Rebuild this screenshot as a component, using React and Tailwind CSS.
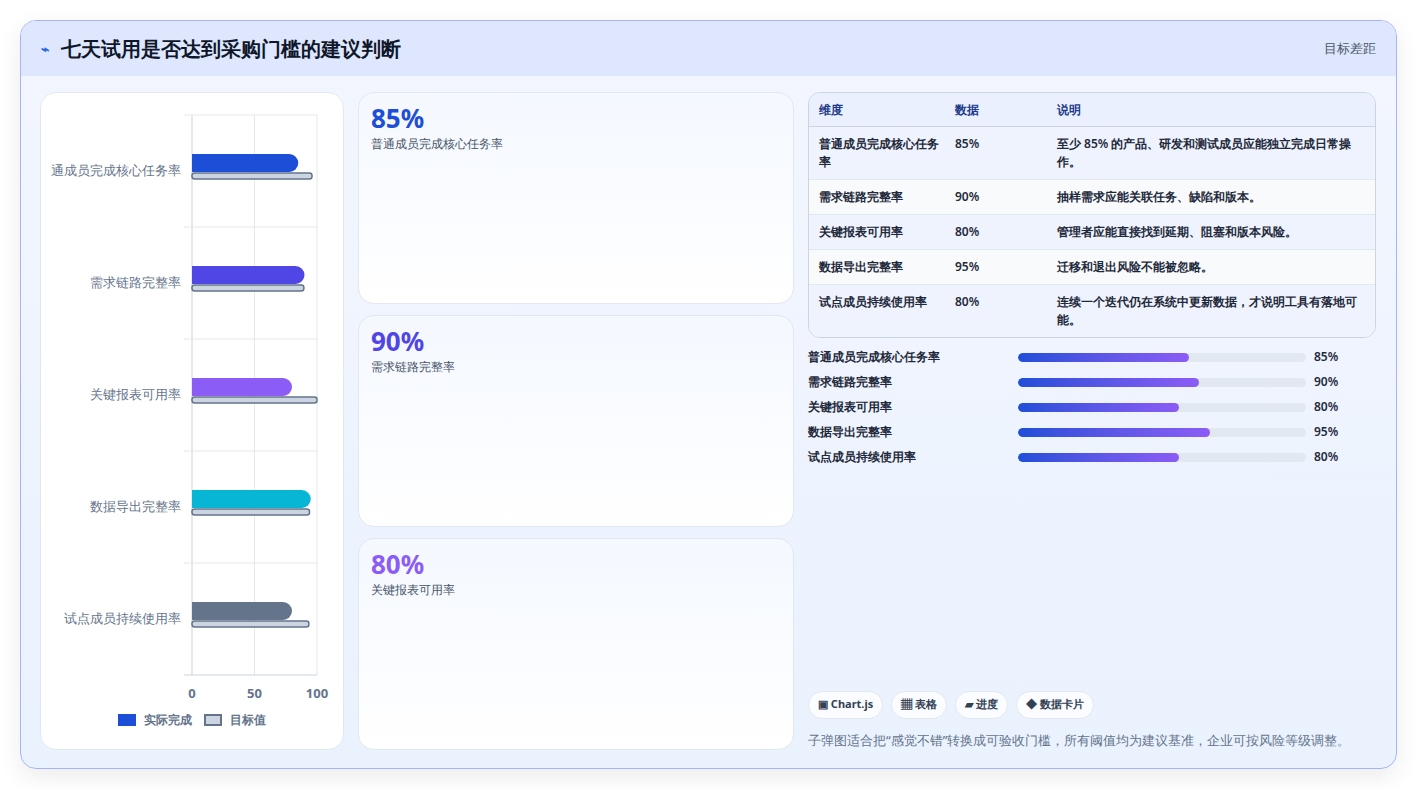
import React from "react";

const rows = [
  ["通成员完成核心任务率", 85, 96, "#1d4ed8"],
  ["需求链路完整率", 90, 89.5, "#4f46e5"],
  ["关键报表可用率", 80, 100, "#8b5cf6"],
  ["数据导出完整率", 95, 94, "#06b6d4"],
  ["试点成员持续使用率", 80, 93.5, "#64748b"],
];

function Chart() {
  const x0 = 151, w = 125, top = 22, band = 112;
  return (
    <svg width="303" height="620" className="block">
      {[0, 50, 100].map((v) => (
        <line key={v} x1={x0 + (v / 100) * w} x2={x0 + (v / 100) * w} y1={top} y2={top + band * 5} stroke={v === 0 ? "#cbd5e1" : "#e5e7eb"} />
      ))}
      {[0, 1, 2, 3, 4, 5].map((i) => (
        <line key={i} x1={x0 - 8} x2={x0 + w} y1={top + band * i} y2={top + band * i} stroke={i === 5 ? "#cbd5e1" : "#e5e7eb"} />
      ))}
      {rows.map(([l, a, t, c], i) => {
        const cy = top + band * i + 56;
        const aw = (a / 100) * w, tw = (t / 100) * w;
        return (
          <g key={i}>
            <text x={x0 - 11} y={cy + 4} textAnchor="end" fontSize="13" fill="#64748b">{l}</text>
            <path d={`M${x0} ${cy - 17} H${x0 + aw - 9} a9 9 0 0 1 9 9 v0 a9 9 0 0 1 -9 9 H${x0} Z`} fill={c} />
            <rect x={x0} y={cy + 2} width={tw} height={6} rx="2.5" fill="#cbd5e1" stroke="#64748b" strokeWidth="1.5" />
          </g>
        );
      })}
      {[0, 50, 100].map((v) => (
        <text key={v} x={x0 + (v / 100) * w} y={605} textAnchor="middle" fontSize="13" fontWeight="700" fill="#64748b">{v}</text>
      ))}
    </svg>
  );
}

const table = [
  ["普通成员完成核心任务率", "85%", "至少 85% 的产品、研发和测试成员应能独立完成日常操作。"],
  ["需求链路完整率", "90%", "抽样需求应能关联任务、缺陷和版本。"],
  ["关键报表可用率", "80%", "管理者应能直接找到延期、阻塞和版本风险。"],
  ["数据导出完整率", "95%", "迁移和退出风险不能被忽略。"],
  ["试点成员持续使用率", "80%", "连续一个迭代仍在系统中更新数据，才说明工具有落地可能。"],
];

const cards = [
  ["85%", "普通成员完成核心任务率", "text-[#1d4ed8]"],
  ["90%", "需求链路完整率", "text-[#4f46e5]"],
  ["80%", "关键报表可用率", "text-[#8b5cf6]"],
];

export default function App() {
  return (
    <div className="w-[1417px] h-[789px] bg-white p-5 font-['Liberation_Sans','Noto_Sans_CJK_SC',sans-serif]">
      <div className="h-[749px] rounded-2xl border border-[#a5b4fc] bg-gradient-to-b from-[#f3f6fe] to-[#eaf2fe] overflow-hidden shadow-[0_8px_24px_rgba(0,0,0,0.08)] flex flex-col">
        <div className="h-[55px] bg-[#dee7fd] flex items-center justify-between px-5 shrink-0">
          <div className="flex items-center gap-3">
            <span className="text-[#2563eb] text-[14px] font-bold">⌁</span>
            <span className="text-[20px] font-bold text-[#0f172a]">七天试用是否达到采购门槛的建议判断</span>
          </div>
          <span className="text-[13px] text-[#475569]">目标差距</span>
        </div>
        <div className="flex-1 flex gap-[14px] pl-[19px] pr-5 pt-[16px] pb-[18px]">
          <div className="w-[304px] bg-white rounded-2xl border border-[#e2e8f0] relative">
            <div className="absolute left-0 top-0"><Chart /></div>
            <div className="absolute left-0 right-0 bottom-[20px] flex justify-center items-center gap-2 text-[12px] font-bold text-[#64748b]">
              <span className="w-[18px] h-[12px] bg-[#1d4ed8]" />实际完成
              <span className="w-[18px] h-[12px] bg-[#cbd5e1] border-2 border-[#64748b] ml-1" />目标值
            </div>
          </div>
          <div className="w-[436px] flex flex-col gap-[11px]">
            {cards.map(([v, l, c]) => (
              <div key={l} className="flex-1 rounded-2xl bg-gradient-to-b from-[#f4f8ff] to-white border border-[#e2e8f0] px-3 py-[10px]">
                <div className={`text-[26px] font-bold leading-[30px] ${c}`}>{v}</div>
                <div className="text-[12px] text-[#475569] mt-[2px]">{l}</div>
              </div>
            ))}
          </div>
          <div className="flex-1 flex flex-col">
            <div className="rounded-xl border border-[#cbd5e1] overflow-hidden text-[12px] font-semibold text-[#1e293b]">
              <div className="flex bg-[#eaf0fd] text-[#1e3a8a] font-bold h-[34px] items-center border-b border-[#cbd5e1]">
                <div className="w-[146px] pl-[10px]">维度</div><div className="w-[102px]">数据</div><div className="flex-1">说明</div>
              </div>
              {table.map((r, i) => (
                <div key={i} className={`flex py-[8px] leading-[18px] ${i % 2 ? "bg-[#f8fafc]" : "bg-[#eef3fd]"} ${i < 4 ? "border-b border-[#e2e8f0]" : ""}`}>
                  <div className="w-[146px] pl-[10px] pr-3">{r[0]}</div><div className="w-[102px]">{r[1]}</div><div className="flex-1 pr-4">{r[2]}</div>
                </div>
              ))}
            </div>
            <div className="mt-[10px] flex flex-col gap-[7px]">
              {table.map((r) => (
                <div key={r[0]} className="flex items-center h-[18px] text-[12px] font-semibold text-[#1e293b]">
                  <div className="w-[210px]">{r[0]}</div>
                  <div className="w-[288px] h-[9px] rounded-full bg-[#e2e8f0] overflow-hidden">
                    <div className="h-full rounded-full bg-gradient-to-r from-[#1d4ed8] to-[#8b5cf6]" style={{ width: `${parseInt(r[1]) * 0.7}%` }} />
                  </div>
                  <div className="ml-2">{r[1]}</div>
                </div>
              ))}
            </div>
            <div className="mt-auto flex gap-2">
              {["▣ Chart.js", "▦ 表格", "▰ 进度", "◆ 数据卡片"].map((t) => (
                <span key={t} className="rounded-full bg-white/80 border border-[#e2e8f0] px-[9px] h-[28px] flex items-center text-[11px] font-bold text-[#334155]">{t}</span>
              ))}
            </div>
            <div className="mt-[12px] text-[13px] text-[#64748b]">子弹图适合把“感觉不错”转换成可验收门槛，所有阈值均为建议基准，企业可按风险等级调整。</div>
          </div>
        </div>
      </div>
    </div>
  );
}
